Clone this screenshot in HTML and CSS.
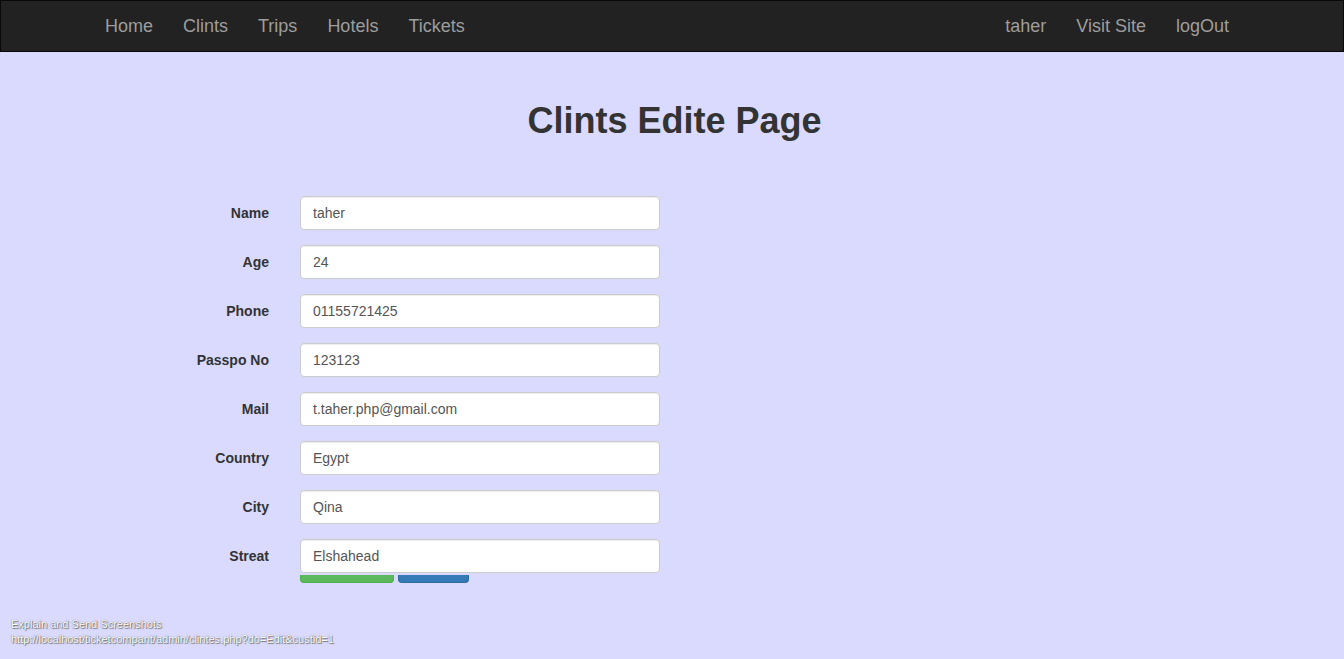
FILE: index.html
```html
<!DOCTYPE html>
<html>
<head>
<meta charset="utf-8">
<link rel="stylesheet" href="styles.css">
</head>
<body>
<nav class="navbar">
  <ul class="nav nav-left">
    <li><a href="#">Home</a></li>
    <li><a href="#">Clints</a></li>
    <li><a href="#">Trips</a></li>
    <li><a href="#">Hotels</a></li>
    <li><a href="#">Tickets</a></li>
  </ul>
  <ul class="nav nav-right">
    <li><a href="#">taher</a></li>
    <li><a href="#">Visit Site</a></li>
    <li><a href="#">logOut</a></li>
  </ul>
</nav>
<main class="page">
  <h1 class="title">Clints Edite Page</h1>
  <form class="form">
    <div class="row"><label>Name</label><input class="field" value="taher"></div>
    <div class="row"><label>Age</label><input class="field" value="24"></div>
    <div class="row"><label>Phone</label><input class="field" value="01155721425"></div>
    <div class="row"><label>Passpo No</label><input class="field" value="123123"></div>
    <div class="row"><label>Mail</label><input class="field" value="t.taher.php@gmail.com"></div>
    <div class="row"><label>Country</label><input class="field" value="Egypt"></div>
    <div class="row"><label>City</label><input class="field" value="Qina"></div>
    <div class="row last"><label>Streat</label><input class="field" value="Elshahead"></div>
    <div class="buttons">
      <span class="btn btn-green"></span>
      <span class="btn btn-blue"></span>
    </div>
  </form>
</main>
<div class="overlay">
  <div>Explain and Send Screenshots</div>
  <div>http://localhost/ticketcompant/admin/clintes.php?do=Edit&amp;custid=1</div>
</div>
</body>
</html>
```

FILE: styles.css
```css
* { box-sizing: border-box; }
html, body { margin: 0; padding: 0; }
body {
  background: #dadafe;
  font-family: "Liberation Sans", Arial, sans-serif;
  font-size: 14px;
  color: #333;
  height: 659px;
  overflow: hidden;
  position: relative;
}
.navbar {
  height: 52px;
  background: #222;
  border: 1px solid #080808;
  display: flex;
  justify-content: space-between;
  align-items: center;
  padding: 0 99px 0 89px;
}
.nav {
  list-style: none;
  margin: 0;
  padding: 0;
  display: flex;
}
.nav a {
  display: block;
  padding: 13px 15px 13px 15px;
  font-size: 18px;
  line-height: 24px;
  color: #9d9d9d;
  text-decoration: none;
}
.page {
  padding-top: 47px;
}
.title {
  margin: 0;
  text-align: center;
  font-size: 36px;
  font-weight: bold;
  line-height: 44px;
  color: #333;
  padding-left: 5px;
}
.form {
  margin-top: 53px;
}
.row {
  display: flex;
  align-items: center;
  margin-bottom: 15px;
}
.row.last { margin-bottom: 0; }
.row label {
  width: 270px;
  text-align: right;
  font-weight: bold;
  font-size: 14px;
  padding-right: 1px;
}
.field {
  margin-left: 30px;
  width: 360px;
  height: 34px;
  border: 1px solid #ccc;
  border-radius: 4px;
  padding: 6px 12px;
  font-family: "Liberation Sans", Arial, sans-serif;
  font-size: 14px;
  color: #555;
  background: #fff;
  box-shadow: inset 0 1px 1px rgba(0,0,0,.075);
}
.buttons {
  display: flex;
  gap: 4px;
  padding-left: 300px;
  margin-top: 2px;
}
.btn {
  display: block;
  height: 8px;
  border-radius: 0 0 4px 4px;
}
.btn-green { width: 94px; background: #5cb85c; border: 1px solid #4cae4c; border-top: 0; }
.btn-blue { width: 71px; background: #337ab7; border: 1px solid #2e6da4; border-top: 0; }
.overlay {
  position: absolute;
  left: 11px;
  top: 617px;
  font-family: "Liberation Sans", Arial, sans-serif;
  font-size: 11px;
  line-height: 15px;
  color: #fff;
  text-shadow: 0 0 1px #555, 1px 1px 1px #777;
}
```
